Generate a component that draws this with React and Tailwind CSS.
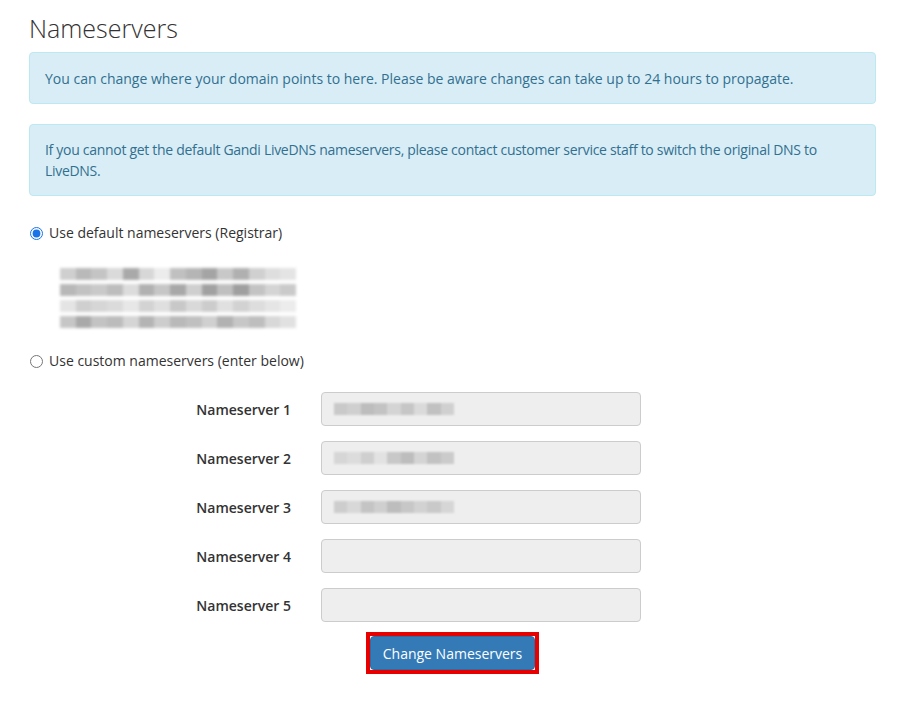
import React from 'react';

const BLUR_ROWS = [
  ['#cfcfcf', '#b9b9b9', '#c4c4c4', '#dadada', '#a9a9a9', '#d7d7d7', '#ececec', '#c0c0c0', '#b5b5b5', '#a4a4a4', '#c8c8c8', '#b0b0b0', '#d0d0d0', '#dedede', '#e4e4e4'],
  ['#b8b8b8', '#c2c2c2', '#c9c9c9', '#bdbdbd', '#dcdcdc', '#b1b1b1', '#c6c6c6', '#a8a8a8', '#cfcfcf', '#a1a1a1', '#bfbfbf', '#9f9f9f', '#c3c3c3', '#d4d4d4', '#cacaca'],
  ['#e4e4e4', '#cfcfcf', '#d6d6d6', '#dbdbdb', '#e7e7e7', '#d3d3d3', '#dfdfdf', '#c8c8c8', '#d9d9d9', '#cccccc', '#e0e0e0', '#d2d2d2', '#dddddd', '#e5e5e5', '#ececec'],
  ['#c6c6c6', '#a9a9a9', '#c3c3c3', '#bcbcbc', '#d5d5d5', '#b4b4b4', '#cdcdcd', '#b9b9b9', '#c0c0c0', '#d0d0d0', '#b2b2b2', '#c7c7c7', '#bebebe', '#d8d8d8', '#e1e1e1'],
];

const INPUT_BLUR = {
  1: ['#c9c9c9', '#cfcfcf', '#bdbdbd', '#c3c3c3', '#d4d4d4', '#c6c6c6', '#dadada', '#c1c1c1', '#d0d0d0'],
  2: ['#d6d6d6', '#dcdcdc', '#cfcfcf', '#e2e2e2', '#c8c8c8', '#bdbdbd', '#d4d4d4', '#c2c2c2', '#cbcbcb'],
  3: ['#cdcdcd', '#d8d8d8', '#c4c4c4', '#cfcfcf', '#bdbdbd', '#c7c7c7', '#d2d2d2', '#c9c9c9', '#d6d6d6'],
};

const Alerta = ({ children, extra = '' }) => (
  <div className={`bg-[#d9edf7] border border-[#bce8f1] rounded text-[#31708f] px-[15px] text-[14px] leading-[21px] ${extra}`}>
    {children}
  </div>
);

const Difuso = () => (
  <div className="flex flex-col gap-[4px] blur-[1.8px] w-[236px]">
    {BLUR_ROWS.map((fila, i) => (
      <div key={i} className="flex h-[12px]">
        {fila.map((c, j) => (
          <div key={j} className="flex-1 h-full" style={{ backgroundColor: c }} />
        ))}
      </div>
    ))}
  </div>
);

const FilaNS = ({ n }) => (
  <div className="flex items-center h-[34px]">
    <label className="w-[277px] text-right pr-[15px] font-semibold text-[14px] text-[#333]">
      Nameserver {n}
    </label>
    <div className="px-[15px] w-[350px]">
      <div className="h-[34px] bg-[#eeeeee] border border-[#cccccc] rounded flex items-center px-[12px]">
        {INPUT_BLUR[n] && (
          <div className="flex h-[12px] w-[120px] blur-[1px]">
            {INPUT_BLUR[n].map((c, j) => (
              <div key={j} className="flex-1 h-full" style={{ backgroundColor: c }} />
            ))}
          </div>
        )}
      </div>
    </div>
  </div>
);

export default function App() {
  return (
    <div className="bg-white w-[912px] h-[710px] pl-[29px] pt-[13px] text-[#333] font-['Open_Sans',sans-serif] text-[14px]">
      <div className="w-[847px]">
        <h1 className="text-[25px] font-light leading-[30px] text-[#333] mb-[9px]">Nameservers</h1>

        <Alerta extra="h-[52px] flex items-center">
          You can change where your domain points to here. Please be aware changes can take up to 24 hours to propagate.
        </Alerta>

        <div className="mt-[20px]">
          <Alerta extra="tracking-[-0.3px] py-[14px]">
            If you cannot get the default Gandi LiveDNS nameservers, please contact customer service staff to switch the original DNS to LiveDNS.
          </Alerta>
        </div>

        <div className="mt-[27px] flex items-center gap-[6px] ml-[1px]">
          <input type="radio" name="ns" defaultChecked className="w-[13px] h-[13px] m-0 accent-[#1a73e8]" />
          <span className="leading-[20px]">Use default nameservers (Registrar)</span>
        </div>

        <div className="mt-[25px] ml-[31px]">
          <Difuso />
        </div>

        <div className="mt-[23px] flex items-center gap-[6px] ml-[1px]">
          <input type="radio" name="ns" className="w-[13px] h-[13px] m-0" />
          <span className="leading-[20px]">Use custom nameservers (enter below)</span>
        </div>

        <div className="mt-[21px] flex flex-col gap-[15px]">
          {[1, 2, 3, 4, 5].map((n) => (
            <FilaNS key={n} n={n} />
          ))}
        </div>

        <div className="flex justify-center mt-[10px]">
          <div className="border-[4px] border-[#e60000] bg-white">
            <button className="bg-[#337ab7] text-white text-[14px] whitespace-nowrap h-[34px] w-[165px] rounded border border-[#2e6da4]">
              Change Nameservers
            </button>
          </div>
        </div>
      </div>
    </div>
  );
}
